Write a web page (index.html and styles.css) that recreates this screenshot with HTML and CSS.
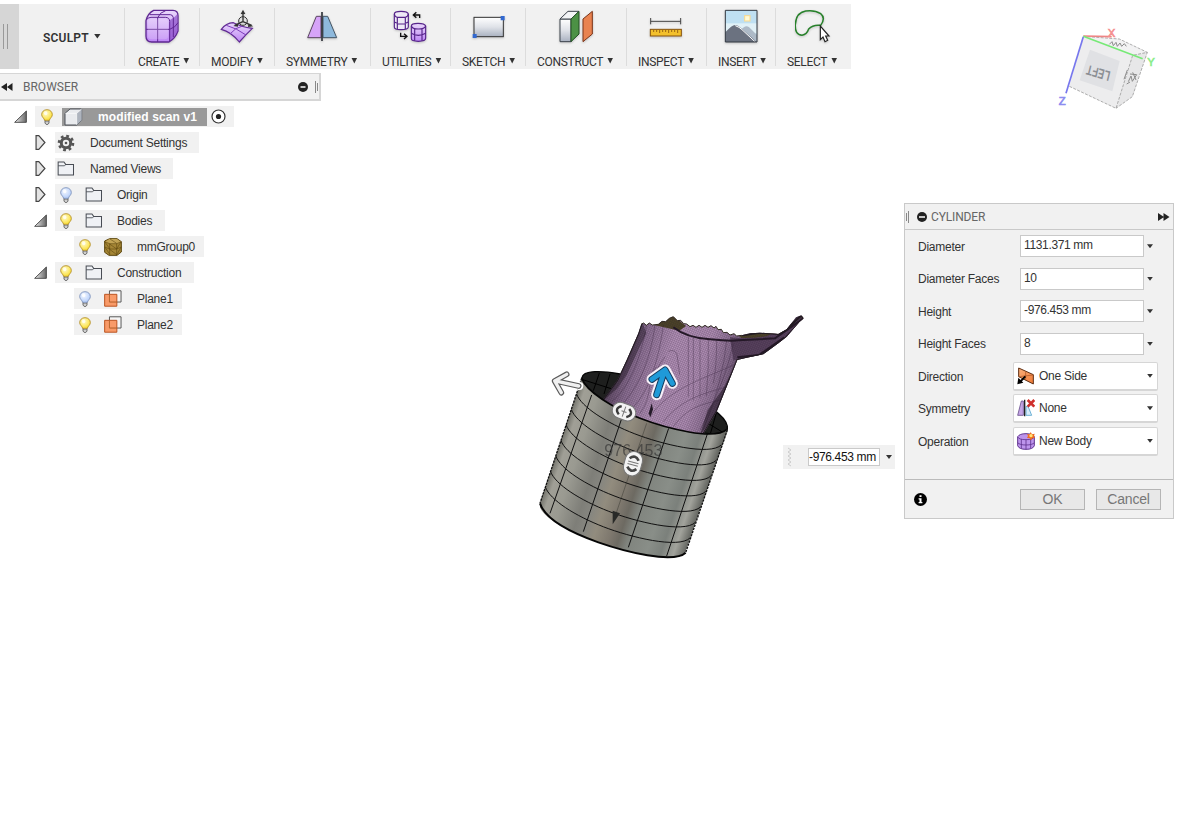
FILE: index.html
```html
<!DOCTYPE html>
<html lang="en">
<head>
<meta charset="utf-8">
<title>modified scan v1</title>
<link rel="stylesheet" href="styles.css">
</head>
<body>
<svg class="defs" width="0" height="0" aria-hidden="true">
  <defs>
    <linearGradient id="purple" x1="0" y1="0" x2="0" y2="1"><stop offset="0" stop-color="#e9d8fb"/><stop offset="1" stop-color="#be86f5"/></linearGradient>
    <linearGradient id="steel" x1="0" y1="0" x2="0" y2="1"><stop offset="0" stop-color="#fff"/><stop offset=".5" stop-color="#dfe2e8"/><stop offset="1" stop-color="#a9b1c0"/></linearGradient>
    <linearGradient id="orange" x1="0" y1="0" x2="1" y2="1"><stop offset="0" stop-color="#f9b07c"/><stop offset="1" stop-color="#f07a35"/></linearGradient>
    <linearGradient id="tri" x1="0" y1="0" x2="1" y2="0"><stop offset="0" stop-color="#eee"/><stop offset="1" stop-color="#666"/></linearGradient>
    <radialGradient id="glowOn" cx=".4" cy=".35" r=".65"><stop offset="0" stop-color="#fffbd0"/><stop offset="1" stop-color="#fbdf35"/></radialGradient>
    <radialGradient id="glowOff" cx=".4" cy=".35" r=".65"><stop offset="0" stop-color="#f4f8ff"/><stop offset="1" stop-color="#b4cdfa"/></radialGradient>
  </defs>
  <symbol id="bulb-base" viewBox="0 0 36 48"><path d="M12 32h12v10l-3 4h-6l-3-4z" fill="#ddd" stroke="#555" stroke-width="2.5"/><path d="M12 38h12" stroke="#666" stroke-width="2"/></symbol>
  <symbol id="bulb-on" viewBox="0 0 36 48"><use href="#bulb-base" width="36" height="48"/><path d="M18 2C8 2 2 9 2 17c0 7 7 10 9 17h14c2-7 9-10 9-17C34 9 28 2 18 2z" fill="url(#glowOn)" stroke="#b08a25" stroke-width="2.5"/><ellipse cx="14" cy="13" rx="5" ry="6" fill="#fff" opacity=".7"/></symbol>
  <symbol id="bulb-off" viewBox="0 0 36 48"><use href="#bulb-base" width="36" height="48"/><path d="M18 2C8 2 2 9 2 17c0 7 7 10 9 17h14c2-7 9-10 9-17C34 9 28 2 18 2z" fill="url(#glowOff)" stroke="#7b8fb8" stroke-width="2.5"/><ellipse cx="14" cy="13" rx="5" ry="6" fill="#fff" opacity=".8"/></symbol>
  <symbol id="folder" viewBox="0 0 50 44"><path d="M2 41V3h17l5 7h23v31z" fill="#eff1f5" stroke="#484c54" stroke-width="3"/><path d="M2 14h18l5-4" fill="none" stroke="#484c54" stroke-width="2.5"/></symbol>
  <symbol id="open" viewBox="0 0 40 40"><path d="M2 38h36V3z" fill="url(#tri)" stroke="#333" stroke-width="2.5"/></symbol>
  <symbol id="closed" viewBox="0 0 32 44"><path d="M3 2h8l18 20-18 20H3z" fill="#e4e4e4" stroke="#444" stroke-width="3.5"/></symbol>
  <symbol id="plane" viewBox="0 0 56 52"><path d="M17 2h36v35H17z" fill="#f5f5f5" stroke="#555" stroke-width="3"/><path d="M2 13h38v37H2z" fill="#f98b50" fill-opacity=".85" stroke="#b9501c" stroke-width="3"/><path d="M17 13v24h23" fill="none" stroke="#b9672f" stroke-width="3"/></symbol>
</svg>

<main class="app">
  <nav class="toolbar">
    <div class="grip"><i></i><i></i></div>
    <div class="workspace">SCULPT<b class="caret"></b></div>
    <div class="tool">
      <svg class="tool-icon" viewBox="434 24 108 108"><path d="M463 31h58q15 0 15 16v46q-8 22-27 33h-52q-17 0-17-17V62q5-22 23-31z" fill="url(#purple)" stroke="#5f2793" stroke-width="4"/><path d="M512 60q16-8 22-18v52q-8 18-24 28z" fill="#8548c4" opacity=".65"/><path d="M441 60q4-8 14-8h43q13 0 13 13v60M440 88h71q18-6 25-20M475 126V53q6-16 24-21M451 44h62q7 0 9 9v58" fill="none" stroke="#5f2793" stroke-width="3"/><rect x="446" y="58" width="60" height="60" rx="10" fill="#fff" opacity=".18"/></svg>
      <span>CREATE<b class="caret"></b></span></div>
    <div class="tool">
      <svg class="tool-icon" viewBox="657 24 108 108"><path d="M664 88q14-19 36-20 23 12 57 17-18 17-39 41-25-31-54-38z" fill="url(#purple)" stroke="#5f2793" stroke-width="3.5"/><path d="M679 76q30 8 59 29M690 102q16-20 38-24" fill="none" stroke="#7d3dba" stroke-width="3"/><g fill="none" stroke="#333" stroke-width="4"><path d="M729 66V36M728 65l-24 11M729 65l26 11"/><circle cx="729" cy="63" r="13" stroke-width="3"/></g><path d="M729 29l-7 13h14zM700 78l14-7v9zM760 79l-15-8-1 10z" fill="#333"/></svg>
      <span>MODIFY<b class="caret"></b></span></div>
    <div class="tool">
      <svg class="tool-icon" viewBox="102 24 108 108"><path d="M153 49h-14l-26 64h40z" fill="#d6a4f8" stroke="#59455f" stroke-width="3"/><path d="M159 49h14l27 64h-41z" fill="#8eb9dc" stroke="#445564" stroke-width="3"/><path d="M156 36v87" stroke="#30333a" stroke-width="5"/></svg>
      <span>SYMMETRY<b class="caret"></b></span></div>
    <div class="tool">
      <svg class="tool-icon" viewBox="366 24 108 108"><g stroke="#56248a" stroke-width="3.5"><path d="M373 42q0-8 20-8t22 8v39q-1 8-22 8t-20-8z" fill="#eee9f5"/><path d="M373 42q2 10 9 10h24q8-2 9-10M382 52v36M406 52v36M373 66q10 6 21 6t21-6" fill="none"/><path d="M424 78q0-8 20-8t23 8v37q0 9-22 9t-21-9z" fill="url(#purple)"/><path d="M424 78q2 9 21 9t22-9M434 86v36M456 86v36M424 100q9 6 21 6t22-6" fill="none"/></g><path d="M449 54v-9h-17M439 37l-9 8 9 8M392 98v11h17M402 101l9 8-9 8" fill="none" stroke="#111" stroke-width="4"/></svg>
      <span>UTILITIES<b class="caret"></b></span></div>
    <div class="tool">
      <svg class="tool-icon" viewBox="598 24 108 108"><rect x="610" y="52" width="88" height="58" fill="url(#steel)" stroke="#333" stroke-width="3"/><path d="M690 48h12v13h-12zM606 102h12v12h-12z" fill="#3268cf"/></svg>
      <span>SKETCH<b class="caret"></b></span></div>
    <div class="tool">
      <svg class="tool-icon" viewBox="-8 24 108 108"><path d="M-2 57v68h33V57z" fill="url(#steel)" stroke="#3b424b" stroke-width="3"/><path d="M-2 57l24-23h33L31 57z" fill="#f3f4f6" stroke="#3b424b" stroke-width="3"/><path d="M31 57l24-23v68l-24 23z" fill="#4c9145" stroke="#234f25" stroke-width="3"/><path d="M67 57l28-23v68l-28 23z" fill="#e98350" stroke="#7b3418" stroke-width="3"/></svg>
      <span>CONSTRUCT<b class="caret"></b></span></div>
    <div class="tool">
      <svg class="tool-icon" viewBox="264 24 108 108"><path d="M272 64h90M272 54v19M362 54v19" stroke="#444" stroke-width="3"/><rect x="271" y="88" width="93" height="20" fill="#f3c02c" stroke="#85520e" stroke-width="3"/><path d="M281 90v6m9-6v6m9-6v9m9-9v6m9-6v6m9-6v9m9-9v6m9-6v6m9-6v9" stroke="#85520e" stroke-width="2.5"/></svg>
      <span>INSPECT<b class="caret"></b></span></div>
    <div class="tool">
      <svg class="tool-icon" viewBox="489 24 108 108"><path d="M496 31h95v95h-95z" fill="#bfe0f2"/><path d="M496 70h95v30h-95z" fill="#e1f1f7"/><rect x="554" y="47" width="16" height="16" fill="#fffad5" stroke="#fbd98a" stroke-width="3"/><path d="M536 96q24-29 36-10l19 19v21h-50z" fill="#adbac7"/><path d="M496 97q20-22 29-22t22 13l43 38h-94z" fill="#6b7280"/><path d="M526 77q12 4 20 12l40 37" fill="none" stroke="#fff" stroke-width="3"/><path d="M496 31h95v95h-95z" fill="none" stroke="#333941" stroke-width="3"/></svg>
      <span>INSERT<b class="caret"></b></span></div>
    <div class="tool">
      <svg class="tool-icon" viewBox="708 24 108 108"><path d="M785 76q16-22 0-35-18-12-45-8-29 5-31 40-2 32 20 33 15-3 20-19 13-14 36-11z" fill="none" stroke="#28812b" stroke-width="4.5"/><path d="M784 78v41l8-8 6 14 8-4-6-13h10z" fill="#fff" stroke="#222" stroke-width="3.5"/></svg>
      <span>SELECT<b class="caret"></b></span></div>
  </nav>

  <section class="browser">
    <header class="browser-head">
      <svg width="12" height="8" viewBox="0 0 12 8"><path d="M6 0v8L0 4zM11.500 0v8L6 4z" fill="#222"/></svg>
      <h2>BROWSER</h2>
      <svg class="minus" width="10" height="10" viewBox="0 0 10 10"><circle cx="5" cy="5" r="5" fill="#222"/><path d="M2.500 5h5" stroke="#fff" stroke-width="1.500"/></svg>
      <div class="bars"><i></i><i></i></div>
    </header>
    <ul class="tree">
      <li class="lv0"><svg class="twist" width="13" height="13"><use href="#open"/></svg>
        <div class="node root"><svg class="bulb" width="12" height="16"><use href="#bulb-on"/></svg>
          <div class="selected"><svg width="19" height="18" viewBox="0 0 57 54"><path d="M3 51V16L18 3h35v34L38 51z" fill="#e9ebee" stroke="#4c5158" stroke-width="3"/><path d="M38 16L53 3v34L38 51z" fill="#aeb4be"/><path d="M4 16h34v34M38 16L53 3" fill="none" stroke="#fff" stroke-width="2"/></svg><strong>modified scan v1</strong></div>
          <svg width="15" height="15" viewBox="0 0 15 15"><circle cx="7.500" cy="7.500" r="6.500" fill="#fff" stroke="#333" stroke-width="1.200"/><circle cx="7.500" cy="7.500" r="2.600" fill="#222"/></svg></div></li>
      <li class="lv1"><svg class="twist" width="11" height="15"><use href="#closed"/></svg>
        <div class="node wide"><svg width="18" height="18" viewBox="-9 -9 18 18"><circle r="7" fill="none" stroke="#555" stroke-width="2.600" stroke-dasharray="2.750 2.750"/><circle r="4.700" fill="none" stroke="#555" stroke-width="3"/><circle r="1.300" fill="#555"/></svg><span>Document Settings</span></div></li>
      <li class="lv1"><svg class="twist" width="11" height="15"><use href="#closed"/></svg>
        <div class="node wide"><svg width="18" height="15"><use href="#folder"/></svg><span>Named Views</span></div></li>
      <li class="lv1"><svg class="twist" width="11" height="15"><use href="#closed"/></svg>
        <div class="node origin"><svg class="bulb" width="12" height="16"><use href="#bulb-off"/></svg><svg width="18" height="15"><use href="#folder"/></svg><span>Origin</span></div></li>
      <li class="lv1"><svg class="twist" width="13" height="13"><use href="#open"/></svg>
        <div class="node"><svg class="bulb" width="12" height="16"><use href="#bulb-on"/></svg><svg width="18" height="15"><use href="#folder"/></svg><span>Bodies</span></div></li>
      <li class="lv2"><div class="node"><svg class="bulb" width="12" height="16"><use href="#bulb-on"/></svg><svg width="18" height="18" viewBox="0 0 54 54"><path d="M2 9L17 2h22l13 9v31l-13 10H15L2 43z" fill="#a58636" stroke="#5c460d" stroke-width="3"/><path d="M3 11l15 6h21l12-6-13-8H17z" fill="#c2a455"/><path d="M2 11l15 6h21l14-6M17 17v34M38 17v34M2 27l15 6h21l14-6M17 18l21 15M17 34l21 16M3 12l14 20M3 28l14 20M18 3l20 13M38 33l13-22M38 50l13-22" fill="none" stroke="#59430c" stroke-width="1.600"/></svg><span>mmGroup0</span></div></li>
      <li class="lv1"><svg class="twist" width="13" height="13"><use href="#open"/></svg>
        <div class="node"><svg class="bulb" width="12" height="16"><use href="#bulb-on"/></svg><svg width="18" height="15"><use href="#folder"/></svg><span>Construction</span></div></li>
      <li class="lv2"><div class="node"><svg class="bulb" width="12" height="16"><use href="#bulb-off"/></svg><svg width="18" height="17"><use href="#plane"/></svg><span>Plane1</span></div></li>
      <li class="lv2"><div class="node"><svg class="bulb" width="12" height="16"><use href="#bulb-on"/></svg><svg width="18" height="17"><use href="#plane"/></svg><span>Plane2</span></div></li>
    </ul>
  </section>

  <svg class="model" width="290" height="270" viewBox="0 0 870 810">
    <defs>
      <linearGradient id="wall" gradientUnits="userSpaceOnUse" x1="95" y1="420" x2="530" y2="565">
        <stop offset="0" stop-color="#77776f"/><stop offset=".04" stop-color="#a09f96"/><stop offset=".13" stop-color="#9a9a91"/><stop offset=".26" stop-color="#7e7e78"/><stop offset=".33" stop-color="#868680"/><stop offset=".4" stop-color="#928c7e"/><stop offset=".5" stop-color="#7e786e"/><stop offset=".56" stop-color="#6d6a62"/><stop offset=".62" stop-color="#80847e"/><stop offset=".76" stop-color="#898e88"/><stop offset=".85" stop-color="#7b807b"/><stop offset=".93" stop-color="#a2a39c"/><stop offset="1" stop-color="#646661"/>
      </linearGradient>
      <linearGradient id="scan" gradientUnits="userSpaceOnUse" x1="260" y1="170" x2="620" y2="280">
        <stop offset="0" stop-color="#5f4a63"/><stop offset=".16" stop-color="#93769a"/><stop offset=".4" stop-color="#bc99c0"/><stop offset=".68" stop-color="#b895bc"/><stop offset=".88" stop-color="#8a6f90"/><stop offset="1" stop-color="#453449"/>
      </linearGradient>
      <pattern id="meshA" width="6" height="6" patternUnits="userSpaceOnUse" patternTransform="rotate(24)"><path d="M0 1h6M1 0v6" stroke="#2b1c30" stroke-width="1.300" opacity=".6"/></pattern>
      <path id="ring" d="M155 235C170 275 245 322 330 355C410 386 555 422 590 388"/>
      <clipPath id="scanClip"><path d="M334 72L341 69 349 76 358 69 367 75 385 73 396 64 407 65 418 55 430 50 442 62 452 61 461 71 470 72 480 80 489 76 498 82 507 76 516 82 525 76 534 82 543 77 552 84 558 79 564 89 574 88 580 98 591 97 600 105 612 101 620 108 635 106 660 100 690 98 745 102 770 88 798 52 814 46 821 55 808 66 770 110 745 130 700 163 650 173 622 180 590 260 560 335 518 405C410 386 400 382 330 355 280 337 240 315 218 300L262 240 290 180 325 100z"/></clipPath>
    </defs>
    <path d="M155 235C158 208 220 213 270 222C390 240 600 325 592 388C580 420 410 386 330 355C245 322 170 275 155 235z" fill="#1e1f1e" stroke="#050505" stroke-width="4"/>
    <path d="M208 219L190 272M155 238l95 30M240 222l-18 60M560 335l-20 70M510 355l70 43" stroke="#000" stroke-width="3"/>
    <g clip-path="url(#scanClip)">
      <path d="M200 30h640v400H200z" fill="url(#scan)"/>
      <path d="M375 76l55-28 38 30-20 14z" fill="#4e4625"/>
      <path d="M625 106l150-14 50-50v20l-75 50-115 3z" fill="#4e4625"/>
      <path d="M600 112q50 5 110-3l115-60-15 30-60 60-70 30-70 12z" fill="#5b4460"/>
      <path d="M200 30h640v400H200z" fill="url(#meshA)"/>
      <g fill="none" stroke="#35213b" stroke-width="2" opacity=".5">
        <path d="M350 75C330 180 300 260 245 305M375 75C360 190 320 270 270 320M400 75C385 190 350 290 300 330M475 110v180M490 112v190M510 115v180M535 118q2 90-6 170M560 120q0 80-10 130M590 120q-10 120-70 270M610 130q-25 120-100 260M360 350C420 260 540 230 610 195M400 365C460 290 530 280 590 260M430 380C480 310 540 310 570 300M330 340C370 290 350 230 380 200"/>
        <path d="M415 154q20-8 26 10l8 60M405 170q-30 40-35 70"/>
      </g>
      <path d="M337 66L349 100 325 150 290 225 262 265 222 300 180 230z" fill="#170e1a" opacity=".4"/>
      <path d="M630 165l-38 100-34 75-50 70 25-80 50-70z" fill="#170e1a" opacity=".5"/>
      <path d="M430 82q40 32 110 36 60 6 85 3l110-6 85-60M622 172l65-7 75-52" fill="none" stroke="#241827" stroke-width="6"/>
      <path d="M635 106L690 98 745 102 770 88 814 46 821 55 770 110 745 130 700 163 650 173 622 180 590 260 560 335 518 405M334 72l-9 28-35 80-28 60-44 60" fill="none" stroke="#211a20" stroke-width="6"/>
    </g>
    <path d="M334 72L341 69 349 76 358 69 367 75 385 73 396 64 407 65 418 55 430 50 442 62 452 61 461 71 470 72 480 80 489 76 498 82 507 76 516 82 525 76 534 82 543 77 552 84 558 79 564 89 574 88 580 98 591 97 600 105 612 101 620 108 635 106" fill="none" stroke="#302a22" stroke-width="3"/>
    <path d="M365 310l-9 30 5 12 8-24z" fill="#241a28"/>
    <path d="M155 235C170 275 245 322 330 355C410 386 555 422 590 388L592 394 465 760C430 795 285 753 205 727 120 697 45 658 30 622L32 600z" fill="url(#wall)"/>
    <clipPath id="wallClip"><path d="M155 235C170 275 245 322 330 355C410 386 555 422 590 388L465 760C430 795 285 753 205 727 120 697 45 658 30 610z"/></clipPath>
    <g clip-path="url(#wallClip)" fill="none" stroke="#111" stroke-width="3">
      <use href="#ring" x="-15.600" y="46.500"/><use href="#ring" x="-31.200" y="93"/><use href="#ring" x="-46.900" y="139.500"/><use href="#ring" x="-62.500" y="186"/><use href="#ring" x="-78" y="232.500"/><use href="#ring" x="-93.700" y="279"/><use href="#ring" x="-109.400" y="325.500"/>
      <path d="M185 285L60 640M282 335L160 695M416 385L295 742M532 402L410 768"/>
    </g>
    <use href="#ring" fill="none" stroke="#050505" stroke-width="5"/>
    <path d="M155 235L30 610M592 390L467 758" stroke="#111" stroke-width="4" stroke-dasharray="7 3"/>
    <path d="M30 610C45 656 120 697 205 727C285 755 430 792 467 758" fill="none" stroke="#050505" stroke-width="6"/>
    <path d="M350 370L255 650" stroke="#37362f" stroke-width="2" opacity=".7"/>
    <path d="M248 632l22 8-22 33z" fill="#292a28"/>
    <text class="dimension" x="223" y="468" textLength="174" lengthAdjust="spacingAndGlyphs">976.453</text>
    <g fill="none" stroke-linecap="round" stroke-linejoin="round">
      <g id="side-arrow"><path d="M148 258L82 244M110 223L74 243 94 278" stroke="#fff" stroke-width="24"/><path d="M146 258L82 244M110 223L74 243 94 278" stroke="#5b5b5b" stroke-width="17"/><path d="M146 258L82 244M110 223L74 243 94 278" stroke="#f0f0f0" stroke-width="10"/></g>
      <path d="M380 284L403 214M366 238L405 210 427 250" stroke="#f7f0f8" stroke-width="33"/>
      <path d="M380 284L403 214M366 238L405 210 427 250" stroke="#173e61" stroke-width="21"/>
      <path d="M380 284L403 214M366 238L405 210 427 250" stroke="#1f9ad8" stroke-width="15"/>
    </g>
    <g transform="translate(282 335) rotate(20)"><rect x="-36" y="-24" width="72" height="48" rx="24" fill="#f2f2f2" stroke="#777" stroke-width="3"/><path d="M-12-13q-20 13 0 26M12-13q20 13 0 26" fill="none" stroke="#3b3b3b" stroke-width="7"/><path d="M0-16v32M-8 0H8" fill="none" stroke="#777" stroke-width="3"/></g>
    <g transform="translate(309 491) rotate(15)"><rect x="-26" y="-37" width="52" height="74" rx="26" fill="#f2f2f2" stroke="#777" stroke-width="3"/><path d="M-14-13Q0-30 14-13M-14 13Q0 30 14 13" fill="none" stroke="#444" stroke-width="8"/><path d="M-16-4h32M-16 4h32" fill="none" stroke="#777" stroke-width="3"/></g>
  </svg>

  <svg class="viewcube" width="138" height="110" viewBox="0 0 414 330">
    <path d="M130 64L278 121 228 280 88 214z" fill="#ededee"/><path d="M130 64l108 8 84 40-44 10z" fill="#f2f2f3"/><path d="M278 121l44-9-45 133-49 35z" fill="#e7e7e8"/>
    <path d="M150 104l89 34-22 91-98-33z" fill="#e0e1e4"/>
    <path d="M88 214l140 66 50-159 44-9-45 133-49 35M130 64l108 8 84 40" fill="none" stroke="#888" stroke-width="2" stroke-dasharray="9 4"/>
    <text class="cube-face" transform="matrix(-.96 -.28 .24 -.97 213 170)" textLength="72" lengthAdjust="spacingAndGlyphs">LEFT</text>
    <path d="M208 88l8-8 4 12 8-10 4 12 8-10 5 10 8-8 6 8M262 165l-10 28M265 200l8-17 4 16 13-20-20-2m8-5l10 23M260 207l10-6" fill="none" stroke="#8a8a8a" stroke-width="3"/>
    <path d="M130 63l85 2" stroke="#ee8585" stroke-width="5"/><path d="M130 65L78 235" stroke="#7777ed" stroke-width="5"/><path d="M130 64l178 67" stroke="#77e977" stroke-width="5"/>
    <text x="203" y="67" class="axis axis-x">X</text><text x="322" y="153" class="axis axis-y">Y</text><text x="56" y="271" class="axis axis-z">Z</text>
  </svg>

  <div class="quick-value"><svg width="5" height="21" viewBox="0 0 5 21"><path d="M1 1l3 2-3 2 3 2-3 2 3 2-3 2 3 2-3 2 3 2" fill="none" stroke="#ccc"/></svg><div class="quick-input">-976.453 mm</div><b class="caret"></b></div>

  <section class="palette">
    <header><div class="bars"><i></i><i></i></div><svg width="10" height="10" viewBox="0 0 10 10"><circle cx="5" cy="5" r="5" fill="#222"/><path d="M2 5h6" stroke="#fff" stroke-width="1.500"/></svg><h2>CYLINDER</h2><svg class="fast" width="12" height="8" viewBox="0 0 12 8"><path d="M0 0l6 4-6 4zM5.500 0l6 4-6 4z" fill="#222"/></svg></header>
    <div class="fields">
      <div class="field"><label>Diameter</label><div class="input">1131.371 mm</div><b class="caret"></b></div>
      <div class="field"><label>Diameter Faces</label><div class="input">10</div><b class="caret"></b></div>
      <div class="field"><label>Height</label><div class="input">-976.453 mm</div><b class="caret"></b></div>
      <div class="field"><label>Height Faces</label><div class="input">8</div><b class="caret"></b></div>
      <div class="field pick"><label>Direction</label><div class="select"><svg width="18" height="18" viewBox="0 0 54 54"><path d="M5 3l44 20v28L5 29z" fill="url(#orange)" stroke="#5d2d12" stroke-width="3"/><path d="M5 29l44-5M26 13v26" stroke="#a85221" stroke-width="2"/><path d="M25 28L7 47" stroke="#000" stroke-width="6"/><path d="M1 52l3-20 15 15z"/></svg><span>One Side</span><b class="caret"></b></div></div>
      <div class="field pick"><label>Symmetry</label><div class="select"><svg width="18" height="18" viewBox="0 0 54 54"><path d="M19 6h-6L2 49h17z" fill="#c5a6e7" stroke="#69518b" stroke-width="2.500"/><path d="M27 22l7 2 10 25H27z" fill="#d8edfa" stroke="#56a3ce" stroke-width="2.500"/><path d="M23 2v50" stroke="#222" stroke-width="4"/><path d="M32 3l20 20M52 3L32 23" stroke="#cf302d" stroke-width="8"/></svg><span>None</span><b class="caret"></b></div></div>
      <div class="field pick"><label>Operation</label><div class="select"><svg width="18" height="18" viewBox="0 0 54 54"><path d="M2 14Q8 5 27 5t25 9v27q-4 11-25 11T2 41z" fill="#bd94ec" stroke="#60348f" stroke-width="3"/><path d="M2 15q4 8 25 8t25-8M2 32q6 7 25 7t25-7M13 21v28M27 23v29M41 21v27" fill="none" stroke="#60348f" stroke-width="2.500"/><path d="M41 0l4 7 8-2-2 8 3 5-8 1-4 6-4-6-8-1 3-6-3-6 8 1z" fill="#f06c20"/><circle cx="42" cy="11" r="5" fill="#ffe477"/></svg><span>New Body</span><b class="caret"></b></div></div>
    </div>
    <footer><svg width="13" height="13" viewBox="0 0 13 13"><circle cx="6.500" cy="6.500" r="6.500"/><path d="M5.500 2.300h2v1.800h-2zM4.600 5.300h2.900v3.700h.9v1.200H4.600V9h.9V6.500h-.9z" fill="#fff"/></svg><button type="button">OK</button><button type="button">Cancel</button></footer>
  </section>
</main>
</body>
</html>
```

FILE: styles.css
```css
* { box-sizing: border-box; }
body { margin: 0; background: #fff; color: #333; font: 12px/14px "Liberation Sans", Arial, sans-serif; letter-spacing: -.25px; }
svg { display: block; flex: none; letter-spacing: 0; }
.defs { position: absolute; }
h2 { margin: 0; font: 12px/14px Roboto, sans-serif; color: #666; letter-spacing: 0; }
.app { position: relative; height: 813px; overflow: hidden; padding-top: 4px; }
.caret { display: block; flex: none; width: 6px; height: 4px; background: #333; clip-path: polygon(0 0, 100% 0, 50% 100%); }

.toolbar { display: grid; grid-template-columns: 19px 105px 75px 75px 96px 80px 75px 101px 80px 69px 76px; width: 851px; height: 65px; background: #f1f1f1; font: 12px/14px Roboto, sans-serif; letter-spacing: -.3px; }
.grip { display: flex; gap: 3px; padding: 20px 0 0 3px; background: #d6d6d6; }
.grip i { width: 1px; height: 25px; background: #999; }
.workspace { display: flex; align-items: center; gap: 5px; padding: 2px 0 0 24px; font-weight: 600; letter-spacing: .2px; }
.workspace .caret { width: 7px; height: 5px; margin-top: -3px; }
.tool { display: flex; flex-direction: column; align-items: center; padding-top: 4px; background: linear-gradient(#dcdcdc, #dcdcdc) 0 4px / 1px 58px no-repeat; }
.tool-icon { width: 36px; height: 36px; filter: drop-shadow(0 1px 1px #0003); }
.tool span { display: flex; align-items: center; gap: 4px; align-self: flex-start; margin-top: 11px; padding-left: 12px; }
.tool:nth-child(3) span { padding-left: 14px; }
.tool .caret { margin-top: -3px; width: 6px; height: 6px; }

.browser { margin-top: 4px; }
.browser-head { display: flex; align-items: center; width: 321px; height: 28px; padding: 0 0 0 1px; border: 2px solid #d6d6d6; border-width: 1px 2px 2px 0; background: #f1f1f1; }
.browser-head h2 { margin-left: 10px; }
.minus { margin-left: auto; }
.bars { display: flex; gap: 1px; margin: 0 1px 0 7px; align-items: center; }
.bars i { width: 1px; height: 8px; background: #888; }
.bars i:first-child { height: 12px; }
.tree { list-style: none; margin: 5px 0 0; padding: 0; display: flex; flex-direction: column; gap: 5px; }
.tree li { display: flex; align-items: center; height: 21px; }
.lv0 { padding-left: 14px; }
.lv1 { padding-left: 34px; }
.lv2 { padding-left: 74px; }
.lv0 .node, .lv1 .node { margin-left: 8px; }
.lv1 .twist[width="11"] { margin: 0 1px; }
.node { display: flex; align-items: center; height: 21px; padding: 0 13px 0 5px; background: #f1f1f1; }
.node .bulb { margin-right: 13px; }
.node span { margin-left: 14px; }
.node.wide { padding: 0 12px 0 2px; }
.node.wide span { margin-left: 15px; }
.node.origin { padding-right: 9px; }
.root { padding: 0 8px 0 6px; }
.root .bulb { margin-right: 9px; }
.selected { display: flex; align-items: center; width: 145px; height: 18px; margin-right: 4px; padding-left: 2px; background: #999; color: #fff; }
.selected strong { margin-left: 15px; letter-spacing: .1px; white-space: nowrap; }
.lv2 .node { padding-right: 9px; }
.lv2 .node span { margin-left: 15px; }

.model { position: absolute; left: 530px; top: 300px; }
.dimension { font: 48px "Liberation Sans", sans-serif; fill: #343434; opacity: .65; }
.viewcube { position: absolute; left: 1040px; top: 15px; }
.cube-face { font: bold 42px "Liberation Sans", sans-serif; fill: #8c8f94; }
.axis { font: 34px "Liberation Sans", sans-serif; stroke-width: 2px; }
.axis-x { fill: #f59090; stroke: #f59090; }
.axis-y { fill: #8bee8b; stroke: #8bee8b; }
.axis-z { fill: #8b8bf0; stroke: #8b8bf0; }

.quick-value { position: absolute; left: 783px; top: 445px; display: flex; align-items: center; width: 112px; height: 24px; padding-left: 4px; background: #f1f1f1; }
.quick-input { width: 72px; height: 18px; margin: 0 6px 0 16px; border: 1px solid #c9c9c9; background: #fff; color: #111; line-height: 16px; white-space: nowrap; letter-spacing: -.35px; }

.palette { position: absolute; left: 904px; top: 203px; width: 270px; height: 316px; display: flex; flex-direction: column; border: 1px solid #c9c9c9; background: #f1f1f1; }
.palette header { display: flex; align-items: center; height: 26px; border-bottom: 1px solid #c9c9c9; padding-right: 3px; }
.palette header .bars { margin: 0 8px 0 1px; }
.palette header .bars i:first-child { height: 8px; }
.palette header .bars i:last-child { height: 12px; }
.palette header h2 { margin-left: 4px; letter-spacing: -.15px; }
.fast { margin-left: auto; }
.fields { flex: 1; display: grid; grid-auto-rows: 32.5px; padding-left: 13px; }
.field { display: grid; grid-template-columns: 102px 124px 7px; align-items: center; }
.field .caret { margin-left: 3px; }
.field .input { height: 22px; padding: 0 3px; border: 1px solid #c9c9c9; background: #fff; line-height: 19px; letter-spacing: -.35px; }
.field label { padding-top: 1px; }
.pick { grid-template-columns: 95px 145px; }
.select { display: flex; align-items: center; height: 29px; padding: 0 4px 0 3px; border: 1px solid #d6d6d6; border-bottom-width: 2px; background: #fff; border-radius: 2px; }
.select span { margin-left: 4px; }
.select .caret { margin-left: auto; }
.palette footer { display: flex; align-items: center; height: 39px; padding: 0 12px 0 9px; border-top: 1px solid #bbb; }
.palette button { width: 65px; height: 21px; margin: 0 0 0 11px; padding: 0; border: 1px solid #b5b5b5; border-radius: 0; background: #e8e8e8; color: #777; font: 14px "Liberation Sans", Arial, sans-serif; letter-spacing: -.2px; }
.palette footer svg { margin-right: auto; }
```
